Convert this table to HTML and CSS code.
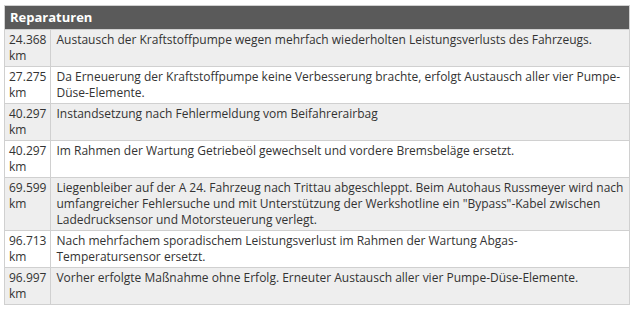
FILE: index.html
```html
<!DOCTYPE html>
<html lang="de">
<head>
<meta charset="utf-8">
<title>Reparaturen</title>
<link rel="stylesheet" href="styles.css">
</head>
<body>
<table class="repairs">
  <thead>
    <tr><th colspan="2">Reparaturen</th></tr>
  </thead>
  <tbody>
    <tr class="odd"><td class="km">24.368 km</td><td>Austausch der Kraftstoffpumpe wegen mehrfach wiederholten Leistungsverlusts des Fahrzeugs.</td></tr>
    <tr><td class="km">27.275 km</td><td>Da Erneuerung der Kraftstoffpumpe keine Verbesserung brachte, erfolgt Austausch aller vier Pumpe-Düse-Elemente.</td></tr>
    <tr class="odd"><td class="km">40.297 km</td><td>Instandsetzung nach Fehlermeldung vom Beifahrerairbag</td></tr>
    <tr><td class="km">40.297 km</td><td>Im Rahmen der Wartung Getriebeöl gewechselt und vordere Bremsbeläge ersetzt.</td></tr>
    <tr class="odd"><td class="km">69.599 km</td><td>Liegenbleiber auf der A 24. Fahrzeug nach Trittau abgeschleppt. Beim Autohaus Russmeyer wird nach umfangreicher Fehlersuche und mit Unterstützung der Werkshotline ein "Bypass"-Kabel zwischen Ladedrucksensor und Motorsteuerung verlegt.</td></tr>
    <tr><td class="km">96.713 km</td><td>Nach mehrfachem sporadischem Leistungsverlust im Rahmen der Wartung Abgas-<br>Temperatursensor ersetzt.</td></tr>
    <tr class="odd"><td class="km">96.997 km</td><td>Vorher erfolgte Maßnahme ohne Erfolg. Erneuter Austausch aller vier Pumpe-Düse-Elemente.</td></tr>
  </tbody>
</table>
</body>
</html>
```
FILE: styles.css
```css
html, body {
  margin: 0;
  padding: 0;
  background: #fff;
}
body {
  padding: 5px 10px 0 4px;
  font-family: "Open Sans", "Liberation Sans", sans-serif;
  font-size: 12px;
  color: #333;
}
.repairs {
  width: 626px;
  border-collapse: collapse;
  border: 1px solid #d0d0d0;
}
.repairs th {
  background: #5a5a5a;
  color: #fff;
  font-weight: 700;
  font-size: 13px;
  text-align: left;
  padding: 2px 5px 3px;
  height: 23px;
  box-sizing: border-box;
  line-height: 18px;
}
.repairs td {
  vertical-align: top;
  line-height: 16px;
  padding: 2px 2px 2px 5px;
  border-top: 1px solid #d0d0d0;
}
.repairs td.km {
  width: 36px;
  padding: 2px 4px 2px 4px;
  border-right: 1px solid #d0d0d0;
}
.repairs tr.odd td {
  background: #eeeeee;
}
```
